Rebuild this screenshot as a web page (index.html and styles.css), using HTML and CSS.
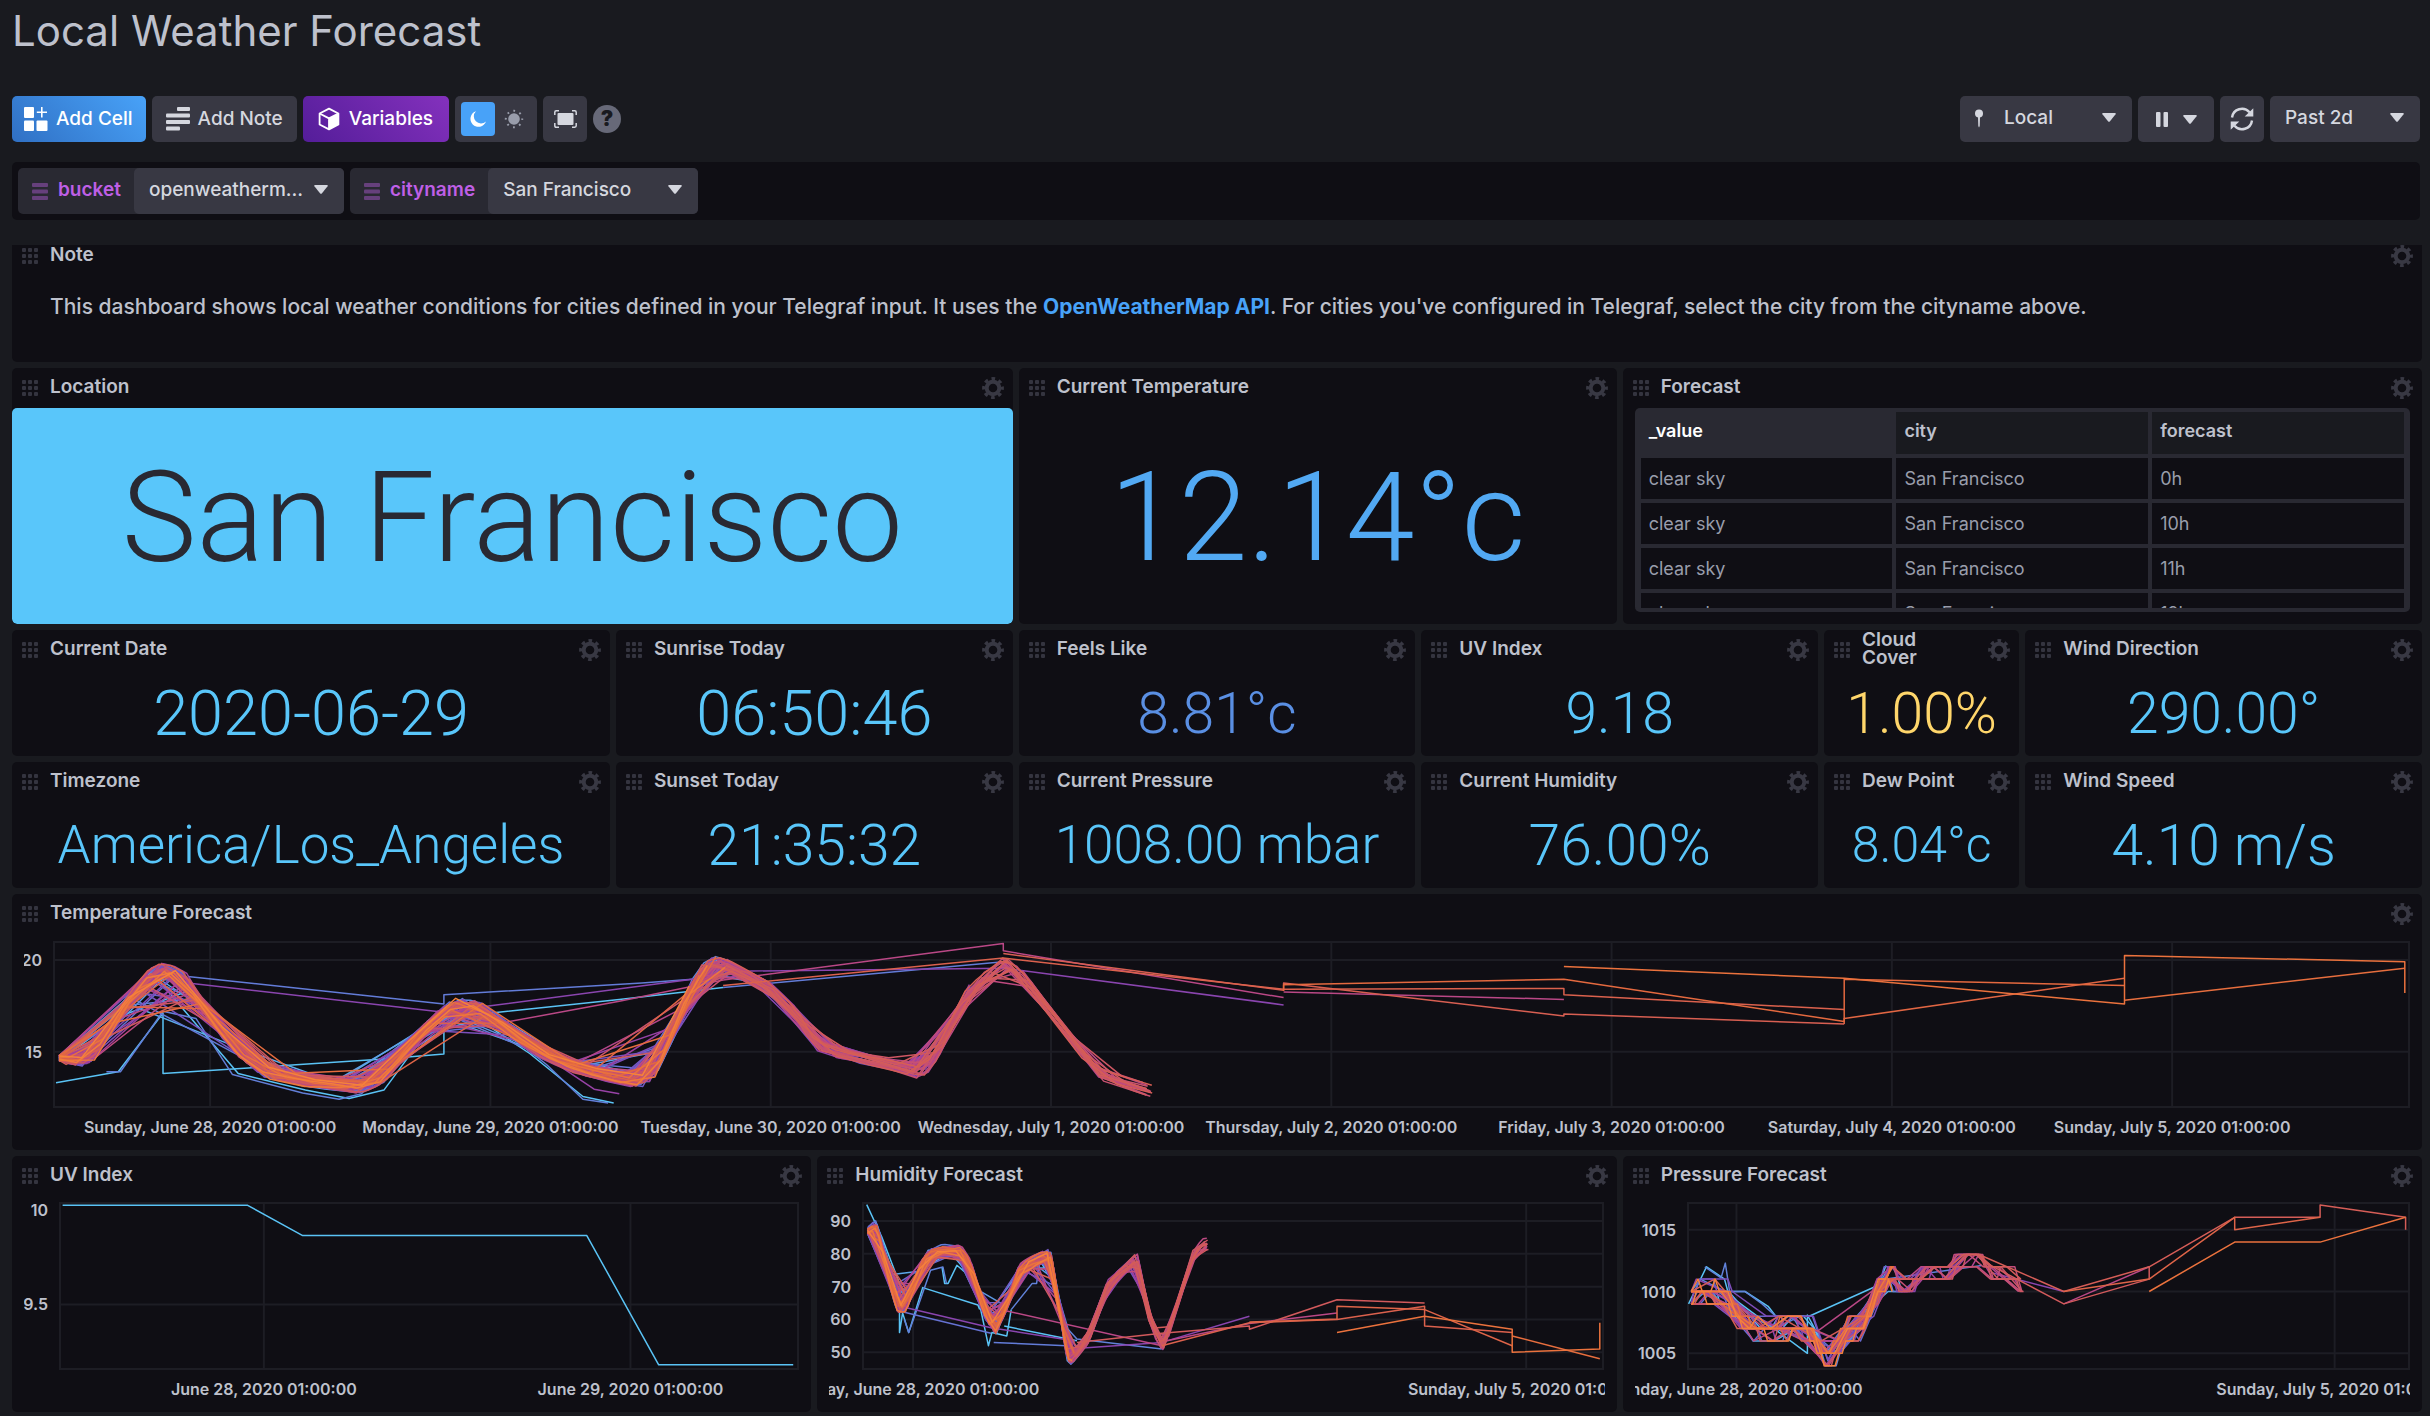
FILE: index.html
```html
<!DOCTYPE html>
<html lang="en">
<head>
<meta charset="utf-8">
<meta name="viewport" content="width=device-width, initial-scale=1">
<title>Local Weather Forecast</title>
<link rel="stylesheet" href="styles.css">
</head>
<body>
<svg class="sprite" aria-hidden="true">
  <symbol id="i-gear" viewBox="0 0 22 22">
    <circle cx="11" cy="11" r="6.3" fill="none" stroke="currentColor" stroke-width="4"/>
    <circle cx="11" cy="11" r="9.2" fill="none" stroke="currentColor" stroke-width="3.4" stroke-dasharray="3.6 3.626" stroke-dashoffset="1.8"/>
  </symbol>
  <symbol id="i-grip" viewBox="0 0 17 17">
    <g fill="currentColor">
      <rect x="0" y="0" width="4" height="4" rx="1"/><rect x="6" y="0" width="4" height="4" rx="1"/><rect x="12" y="0" width="4" height="4" rx="1"/>
      <rect x="0" y="6" width="4" height="4" rx="1"/><rect x="6" y="6" width="4" height="4" rx="1"/><rect x="12" y="6" width="4" height="4" rx="1"/>
      <rect x="0" y="12" width="4" height="4" rx="1"/><rect x="6" y="12" width="4" height="4" rx="1"/><rect x="12" y="12" width="4" height="4" rx="1"/>
    </g>
  </symbol>
  <symbol id="i-caret" viewBox="0 0 14 9"><path d="M1 0h12q1.400 0 .6 1.200L8 8.200q-1 1-2 0L.4 1.200Q-.4 0 1 0z" fill="currentColor"/></symbol>
  <symbol id="i-bars" viewBox="0 0 16 17"><g fill="currentColor"><rect width="16" height="4" rx="1"/><rect y="6.500" width="16" height="4" rx="1"/><rect y="13" width="16" height="4" rx="1"/></g></symbol>
</svg>

<header class="page-header">
  <h1 class="page-title">Local Weather Forecast</h1>
</header>

<div class="toolbar">
  <div class="toolbar-group">
    <button class="btn btn-primary" type="button">
      <svg class="icon" viewBox="0 0 24 24" aria-hidden="true"><g fill="currentColor"><rect x="0" y="0" width="10" height="11" rx="1"/><rect x="0" y="13.500" width="10" height="10.500" rx="1"/><rect x="12.500" y="13.500" width="11" height="10.500" rx="1"/><path d="M17 0h1.600v4.400H23V6h-4.400v4.500H17V6h-4.200V4.400H17z"/></g></svg>
      <span>Add Cell</span>
    </button>
    <button class="btn" type="button">
      <svg class="icon" viewBox="0 0 24 24" aria-hidden="true"><g fill="currentColor"><rect x="11" y="0" width="13" height="4" rx="1"/><rect x="0" y="6.500" width="24" height="4" rx="1"/><rect x="0" y="13" width="24" height="4" rx="1"/><rect x="0" y="19.500" width="14" height="4" rx="1"/></g></svg>
      <span>Add Note</span>
    </button>
    <button class="btn btn-accent" type="button">
      <svg class="icon" viewBox="0 0 24 24" aria-hidden="true"><path d="M12 1.600 21.400 6.500v11L12 22.400 2.600 17.500v-11z" fill="none" stroke="currentColor" stroke-width="1.800" stroke-linejoin="round"/><path d="M2.600 6.500 12 11.400l9.400-4.900M12 11.400v11" fill="none" stroke="currentColor" stroke-width="1.800"/><path d="M12 11.400 21.400 6.500v11L12 22.400z" fill="currentColor"/></svg>
      <span>Variables</span>
    </button>
    <div class="mode-switch" role="group" aria-label="Theme">
      <button class="mode mode-on" type="button" aria-label="Dark mode"><svg width="18" height="18" viewBox="0 0 18 18" aria-hidden="true"><path d="M7 1.200A8 8 0 1 0 17 11.500 6.600 6.600 0 0 1 7 1.200z" fill="currentColor"/></svg></button>
      <button class="mode" type="button" aria-label="Light mode"><svg width="20" height="20" viewBox="0 0 20 20" aria-hidden="true"><circle cx="10" cy="10" r="5.800" fill="currentColor"/><circle cx="10" cy="10" r="8.200" fill="none" stroke="currentColor" stroke-width="2" stroke-dasharray="1.800 4.640" stroke-dashoffset=".9"/></svg></button>
    </div>
    <button class="btn btn-icon" type="button" aria-label="Presentation mode">
      <svg width="23" height="18" viewBox="0 0 23 18" aria-hidden="true"><rect x="3.500" y="3" width="16" height="12" rx="1" fill="currentColor"/><path d="M.8 5V2.200Q.8.800 2.200.800H5M18 .8h2.800q1.400 0 1.400 1.400V5M22.200 13v2.800q0 1.400-1.400 1.400H18M5 17.200H2.200q-1.400 0-1.400-1.400V13" fill="none" stroke="currentColor" stroke-width="1.500"/></svg>
    </button>
    <button class="help" type="button" aria-label="Help">?</button>
  </div>
  <div class="toolbar-group">
    <div class="dropdown dropdown-zone">
      <svg class="pin" viewBox="0 0 8 18" aria-hidden="true"><circle cx="4" cy="4" r="4" fill="currentColor"/><path d="M3 7h2l-.3 9.500-.7 1.500-.7-1.500z" fill="currentColor"/></svg>
      <select aria-label="Time zone"><option>Local</option><option>UTC</option></select>
      <svg class="caret"><use href="#i-caret"/></svg>
    </div>
    <button class="btn btn-pause" type="button" aria-label="Auto refresh">
      <svg width="12" height="15" viewBox="0 0 12 15" aria-hidden="true"><rect width="4.500" height="15" rx="1" fill="currentColor"/><rect x="7.500" width="4.500" height="15" rx="1" fill="currentColor"/></svg>
      <svg width="14" height="9"><use href="#i-caret"/></svg>
    </button>
    <button class="btn btn-icon" type="button" aria-label="Refresh">
      <svg width="24" height="24" viewBox="0 0 24 24" aria-hidden="true"><path d="M2 10.500A10 10 0 0 1 19.500 5.300M22 13.500A10 10 0 0 1 4.500 18.700" fill="none" stroke="currentColor" stroke-width="2.400"/><path d="M23.300 1.200v8.300h-8.600zM.7 22.800v-8.300h8.600z" fill="currentColor"/></svg>
    </button>
    <div class="dropdown dropdown-range">
      <select aria-label="Time range"><option>Past 2d</option><option>Past 7d</option></select>
      <svg class="caret"><use href="#i-caret"/></svg>
    </div>
  </div>
</div>

<div class="variables">
  <div class="variable">
    <label class="variable-name" for="var-bucket"><svg width="16" height="17"><use href="#i-bars"/></svg><span>bucket</span></label>
    <div class="dropdown"><select id="var-bucket"><option>openweatherm…</option></select><svg class="caret"><use href="#i-caret"/></svg></div>
  </div>
  <div class="variable">
    <label class="variable-name" for="var-city"><svg width="16" height="17"><use href="#i-bars"/></svg><span>cityname</span></label>
    <div class="dropdown"><select id="var-city"><option>San Francisco</option></select><svg class="caret"><use href="#i-caret"/></svg></div>
  </div>
</div>

<main class="cells">
  <section class="cell cell-note">
    <header class="cell-header"><svg class="grip"><use href="#i-grip"/></svg><h2>Note</h2><button class="gear" type="button" aria-label="Configure"><svg><use href="#i-gear"/></svg></button></header>
    <p class="note">This dashboard shows local weather conditions for cities defined in your Telegraf input. It uses the <a href="https://openweathermap.org/api">OpenWeatherMap API</a>. For cities you've configured in Telegraf, select the city from the cityname above.</p>
  </section>

  <section class="cell w5">
    <header class="cell-header"><svg class="grip"><use href="#i-grip"/></svg><h2>Location</h2><button class="gear" type="button" aria-label="Configure"><svg><use href="#i-gear"/></svg></button></header>
    <div class="stat stat-filled">San Francisco</div>
  </section>
  <section class="cell w3">
    <header class="cell-header"><svg class="grip"><use href="#i-grip"/></svg><h2>Current Temperature</h2><button class="gear" type="button" aria-label="Configure"><svg><use href="#i-gear"/></svg></button></header>
    <div class="stat stat-xl tone-mild">12.14°c</div>
  </section>
  <section class="cell w4">
    <header class="cell-header"><svg class="grip"><use href="#i-grip"/></svg><h2>Forecast</h2><button class="gear" type="button" aria-label="Configure"><svg><use href="#i-gear"/></svg></button></header>
    <div class="table-box">
      <table>
        <thead><tr><th class="sorted" scope="col">_value</th><th scope="col">city</th><th scope="col">forecast</th></tr></thead>
        <tbody>
          <tr><td>clear sky</td><td>San Francisco</td><td>0h</td></tr>
          <tr><td>clear sky</td><td>San Francisco</td><td>10h</td></tr>
          <tr><td>clear sky</td><td>San Francisco</td><td>11h</td></tr>
          <tr><td>clear sky</td><td>San Francisco</td><td>12h</td></tr>
        </tbody>
      </table>
    </div>
  </section>

  <section class="cell w3">
    <header class="cell-header"><svg class="grip"><use href="#i-grip"/></svg><h2>Current Date</h2><button class="gear" type="button" aria-label="Configure"><svg><use href="#i-gear"/></svg></button></header>
    <div class="stat stat-l">2020-06-29</div>
  </section>
  <section class="cell w2">
    <header class="cell-header"><svg class="grip"><use href="#i-grip"/></svg><h2>Sunrise Today</h2><button class="gear" type="button" aria-label="Configure"><svg><use href="#i-gear"/></svg></button></header>
    <div class="stat stat-l">06:50:46</div>
  </section>
  <section class="cell w2">
    <header class="cell-header"><svg class="grip"><use href="#i-grip"/></svg><h2>Feels Like</h2><button class="gear" type="button" aria-label="Configure"><svg><use href="#i-gear"/></svg></button></header>
    <div class="stat tone-cool">8.81°c</div>
  </section>
  <section class="cell w2">
    <header class="cell-header"><svg class="grip"><use href="#i-grip"/></svg><h2>UV Index</h2><button class="gear" type="button" aria-label="Configure"><svg><use href="#i-gear"/></svg></button></header>
    <div class="stat">9.18</div>
  </section>
  <section class="cell w1">
    <header class="cell-header"><svg class="grip"><use href="#i-grip"/></svg><h2>Cloud Cover</h2><button class="gear" type="button" aria-label="Configure"><svg><use href="#i-gear"/></svg></button></header>
    <div class="stat tone-warm">1.00%</div>
  </section>
  <section class="cell w2">
    <header class="cell-header"><svg class="grip"><use href="#i-grip"/></svg><h2>Wind Direction</h2><button class="gear" type="button" aria-label="Configure"><svg><use href="#i-gear"/></svg></button></header>
    <div class="stat">290.00°</div>
  </section>

  <section class="cell w3">
    <header class="cell-header"><svg class="grip"><use href="#i-grip"/></svg><h2>Timezone</h2><button class="gear" type="button" aria-label="Configure"><svg><use href="#i-gear"/></svg></button></header>
    <div class="stat stat-m">America/Los_Angeles</div>
  </section>
  <section class="cell w2">
    <header class="cell-header"><svg class="grip"><use href="#i-grip"/></svg><h2>Sunset Today</h2><button class="gear" type="button" aria-label="Configure"><svg><use href="#i-gear"/></svg></button></header>
    <div class="stat">21:35:32</div>
  </section>
  <section class="cell w2">
    <header class="cell-header"><svg class="grip"><use href="#i-grip"/></svg><h2>Current Pressure</h2><button class="gear" type="button" aria-label="Configure"><svg><use href="#i-gear"/></svg></button></header>
    <div class="stat stat-m">1008.00 mbar</div>
  </section>
  <section class="cell w2">
    <header class="cell-header"><svg class="grip"><use href="#i-grip"/></svg><h2>Current Humidity</h2><button class="gear" type="button" aria-label="Configure"><svg><use href="#i-gear"/></svg></button></header>
    <div class="stat">76.00%</div>
  </section>
  <section class="cell w1">
    <header class="cell-header"><svg class="grip"><use href="#i-grip"/></svg><h2>Dew Point</h2><button class="gear" type="button" aria-label="Configure"><svg><use href="#i-gear"/></svg></button></header>
    <div class="stat stat-s">8.04°c</div>
  </section>
  <section class="cell w2">
    <header class="cell-header"><svg class="grip"><use href="#i-grip"/></svg><h2>Wind Speed</h2><button class="gear" type="button" aria-label="Configure"><svg><use href="#i-gear"/></svg></button></header>
    <div class="stat">4.10 m/s</div>
  </section>

  <section class="cell w12">
    <header class="cell-header"><svg class="grip"><use href="#i-grip"/></svg><h2>Temperature Forecast</h2><button class="gear" type="button" aria-label="Configure"><svg><use href="#i-gear"/></svg></button></header>
    <svg class="chart" data-chart="temperature" role="img" aria-label="Temperature forecast"></svg>
  </section>

  <section class="cell w4">
    <header class="cell-header"><svg class="grip"><use href="#i-grip"/></svg><h2>UV Index</h2><button class="gear" type="button" aria-label="Configure"><svg><use href="#i-gear"/></svg></button></header>
    <svg class="chart" data-chart="uv" role="img" aria-label="UV index"></svg>
  </section>
  <section class="cell w4">
    <header class="cell-header"><svg class="grip"><use href="#i-grip"/></svg><h2>Humidity Forecast</h2><button class="gear" type="button" aria-label="Configure"><svg><use href="#i-gear"/></svg></button></header>
    <svg class="chart" data-chart="humidity" role="img" aria-label="Humidity forecast"></svg>
  </section>
  <section class="cell w4">
    <header class="cell-header"><svg class="grip"><use href="#i-grip"/></svg><h2>Pressure Forecast</h2><button class="gear" type="button" aria-label="Configure"><svg><use href="#i-gear"/></svg></button></header>
    <svg class="chart" data-chart="pressure" role="img" aria-label="Pressure forecast"></svg>
  </section>
</main>
<script src="charts.js"></script>
</body>
</html>
```
FILE: styles.css
```css
:root {
  --page: #191a1f;
  --cell: #0f0e14;
  --panel: #292932;
  --control: #383843;
  --line: #1d1d24;
  --text: #bec1cc;
  --bright: #d5d7df;
  --muted: #999dab;
  --dim: #34343f;
  --sky: #59c6fa;
  --blue: #48a2f8;
}

* { box-sizing: border-box; }

body {
  margin: 0;
  padding: 0 8px 4px 12px;
  background: var(--page);
  color: var(--text);
  font-family: Inter, "Liberation Sans", sans-serif;
  font-size: 18px;
}

button, select {
  border: 0;
  margin: 0;
  font: inherit;
  color: inherit;
  cursor: pointer;
}

.sprite { display: none; }

.page-title {
  margin: 0 0 34px;
  font-size: 42px;
  font-weight: 400;
  line-height: 62px;
}

/* Toolbar */
.toolbar {
  display: flex;
  justify-content: space-between;
  margin-right: 2px;
}

.toolbar-group {
  display: flex;
  align-items: center;
  gap: 6px;
}

.btn {
  display: flex;
  align-items: center;
  gap: 8px;
  height: 46px;
  padding: 0 14px;
  border-radius: 5px;
  background: var(--control);
  color: var(--bright);
  font-size: 19px;
  font-weight: 500;
}

.btn span { padding-bottom: 2px; }

.icon { width: 24px; height: 24px; }

.btn-primary {
  padding: 0 13px 0 12px;
  background: linear-gradient(45deg, #3070c4, #48a2f8);
  color: #fff;
}

.btn-accent {
  padding: 0 16px 0 14px;
  background: linear-gradient(45deg, #541d99, #8431bd);
  color: #fff;
}

.btn-icon {
  justify-content: center;
  width: 44px;
  padding: 0;
}

.btn-pause {
  justify-content: center;
  gap: 15px;
  width: 76px;
}

.mode-switch {
  display: flex;
  gap: 2px;
  height: 46px;
  padding: 6px;
  border-radius: 5px;
  background: var(--control);
}

.mode {
  display: flex;
  align-items: center;
  justify-content: center;
  width: 34px;
  height: 34px;
  padding: 0;
  border-radius: 4px;
  background: none;
  color: var(--muted);
}

.mode-on {
  background: var(--blue);
  color: #fff;
}

.help {
  width: 28px;
  height: 28px;
  padding: 0;
  border-radius: 50%;
  background: #676978;
  color: var(--page);
  font-size: 21px;
  font-weight: 900;
  line-height: 28px;
}

.dropdown {
  position: relative;
  width: 210px;
}

.dropdown select {
  display: block;
  width: 100%;
  height: 46px;
  padding: 0 36px 3px 15px;
  border-radius: 5px;
  appearance: none;
  background: var(--control);
  color: var(--bright);
  font-size: 19px;
  font-weight: 500;
}

.dropdown-zone { width: 172px; }
.dropdown-zone select { padding-left: 44px; }
.dropdown-range { width: 150px; }

.caret {
  position: absolute;
  top: 17px;
  right: 16px;
  width: 14px;
  height: 9px;
  color: var(--bright);
  pointer-events: none;
}

.pin {
  position: absolute;
  top: 13px;
  left: 15px;
  width: 8px;
  height: 19px;
  color: var(--bright);
  pointer-events: none;
}

/* Variables */
.variables {
  display: flex;
  gap: 6px;
  margin: 20px 2px 25px 0;
  padding: 6px;
  border-radius: 5px;
  background: var(--cell);
}

.variable {
  display: flex;
  border-radius: 5px;
  background: var(--panel);
}

.variable-name {
  display: flex;
  align-items: center;
  gap: 10px;
  padding: 0 13px 0 14px;
  color: #bf5fe6;
  font-size: 19px;
  font-weight: 600;
}

.variable-name span { padding-bottom: 3px; }
.variable-name svg { color: #66407c; }

/* Cells */
.cells {
  display: grid;
  grid-template-columns: repeat(12, minmax(0, 1fr));
  grid-template-rows: 117px 256px repeat(2, 126px) repeat(2, 256px);
  gap: 6px;
}

.cell {
  display: flex;
  flex-direction: column;
  min-width: 0;
  overflow: hidden;
  border-radius: 5px;
  background: var(--cell);
}

.w1 { grid-column: span 1; }
.w2 { grid-column: span 2; }
.w3 { grid-column: span 3; }
.w4 { grid-column: span 4; }
.w5 { grid-column: span 5; }
.w12 { grid-column: span 12; }

.cell-header {
  display: flex;
  flex: none;
  align-items: center;
  height: 40px;
  padding: 0 9px 0 10px;
}

.cell-header h2 {
  flex: 1;
  margin: 0;
  padding: 0 18px 2px 11px;
  font-size: 19px;
  font-weight: 600;
  line-height: 18px;
}

.grip {
  flex: none;
  width: 17px;
  height: 17px;
  color: var(--dim);
}

.gear {
  display: flex;
  padding: 0;
  background: none;
  color: var(--control);
}

.gear svg { width: 22px; height: 22px; }

.cell-note {
  grid-column: span 12;
  border-top-left-radius: 0;
  border-top-right-radius: 0;
}

.cell-note .cell-header { margin-top: -9px; }

.note {
  margin: 0;
  padding: 16px 38px;
  font-size: 21px;
  font-weight: 500;
  line-height: 30px;
}

.note a {
  color: var(--blue);
  font-weight: 700;
  text-decoration: none;
}

/* Single values */
.stat {
  display: flex;
  flex: 1;
  align-items: center;
  justify-content: center;
  color: var(--sky);
  font-family: Roboto, "Liberation Sans", sans-serif;
  font-size: 57px;
  font-weight: 300;
  line-height: 1;
  white-space: nowrap;
}

.stat-s { font-size: 50px; }
.stat-m { font-size: 53px; }
.stat-l { font-size: 63px; }

.stat-xl {
  padding-top: 4px;
  font-size: 124px;
}

.stat-filled {
  padding-top: 4px;
  border-radius: 5px;
  background: var(--sky);
  color: var(--panel);
  font-size: 126px;
}

.tone-mild { color: #52a9f3; }
.tone-cool { color: #5a8fe3; }
.tone-warm { color: #ffd66b; }

/* Table */
.table-box {
  height: 204px;
  margin: 0 12px;
  padding: 0 2px;
  overflow: hidden;
  border-bottom: 4px solid var(--panel);
  border-radius: 5px;
  background: var(--panel);
}

.table-box table {
  width: 100%;
  table-layout: fixed;
  border-spacing: 4px;
}

.table-box th,
.table-box td {
  height: 41px;
  padding: 0 8px;
  background: var(--cell);
  color: var(--muted);
  font-weight: 400;
  line-height: 24px;
  text-align: left;
}

.table-box th {
  height: 42px;
  padding-bottom: 4px;
  background: var(--page);
  color: var(--text);
  font-weight: 600;
}

.table-box th.sorted {
  background: var(--panel);
  color: #fff;
}

/* Charts */
.chart {
  flex: 1;
  width: calc(100% - 24px);
  min-height: 0;
  margin: 0 12px;
}

.chart .frame,
.chart .grid {
  fill: none;
  stroke: var(--line);
  stroke-width: 2;
}

.chart .series {
  fill: none;
  stroke-linejoin: round;
}

.chart text {
  fill: var(--text);
  font-size: 16px;
  font-weight: 600;
}
```
FILE: charts.js
```js
// Times are in days, counted from June 28, 01:00.
const PALETTE = ['#5ac3f5', '#5f8ade', '#6a62cc', '#8347b4', '#a43f9c', '#bf4a80', '#d0595f', '#e3683f', '#f8853a'];
const DAYS = ['Sunday, June 28', 'Monday, June 29', 'Tuesday, June 30', 'Wednesday, July 1', 'Thursday, July 2', 'Friday, July 3', 'Saturday, July 4', 'Sunday, July 5'];

const CHARTS = {
  temperature: {
    x: [-0.557, 7.845], y: [11.98, 20.98], left: 30, top: 8, bottom: 173,
    xTicks: DAYS.map((d, i) => [i, d + ', 2020 01:00:00']),
    yTicks: [20, 15], grid: [20, 15],
    spread: 0.4, lines: 84,
    base: [[-.539,14.65],[-.459,14.4],[-.415,14.8],[-.35,16.5],[-.284,18],[-.211,19.3],[-.168,19.5],[-.124,19.3],[-.08,18.9],[-.051,18],[.036,16.2],[.124,14.6],[.197,13.9],[.328,13.4],[.459,13.2],[.539,13.05],[.62,13.6],[.707,15.3],[.794,16.7],[.875,17.6],[.955,17.5],[1.07,16.1],[1.16,15.1],[1.29,14.2],[1.407,13.75],[1.5,13.4],[1.535,13.3],[1.586,13.9],[1.65,16],[1.71,18.4],[1.754,19.4],[1.79,19.9],[1.834,19.8],[1.93,19],[2,18.4],[2.09,17.1],[2.16,15.4],[2.25,14.9],[2.41,14.4],[2.54,13.8],[2.585,14.6],[2.7,18.2],[2.79,19.4],[2.83,19.9],[2.89,19.4],[2.985,17.4],[3.17,13.8],[3.28,13.2],[3.37,12.8]],
    single: [
      [0, [[-.55,13.3],[-.328,13.9],[-.168,17.1],[-.168,13.8],[.62,14.6],[.834,14.87],[.834,17.1],[1.02,17.13],[1.46,17.85],[1.83,18.5]]],
      [0, [[-.19,19],[.1,13.8],[.34,12.9],[.496,12.45],[.62,12.9],[.794,16.5],[.875,17.6],[1.14,14.9],[1.33,12.55],[1.44,12.2]]],
      [.16, [[-.37,13.9],[-.32,13.9],[-.168,17.2],[-.05,16.8],[.08,13.75],[.33,12.75],[.46,12.4],[.54,12.7],[.8,16.7],[.9,17.9],[1.2,14.3],[1.33,12.4],[1.42,12.2]]],
      [.17, [[-.08,19.1],[.834,17.6],[.834,18.1],[1.54,18.75],[1.72,18.95]]],
      [.17, [[1.83,18.5],[2.83,19.9]]],
      [.4, [[-.08,18.75],[.834,17.15],[1,17.5],[1.7,18.9],[1.93,19.4],[2.83,19.55],[3.83,17.55]]],
      [.45, [[1.2,14.7],[1.37,12.95],[1.46,12.7]]],
      [.6, [[1,16.45],[1.46,17.75],[1.83,18.9],[2.83,20.9],[2.83,20.5],[3.83,17.95]]],
      [.6, [[3.83,18.25],[4.83,17.85]]],
      [.82, [[1.83,18.6],[2.83,20.1],[3.83,18.4],[4.83,18.45],[4.83,18.1],[5.83,17.3]]],
      [.8, [[2.83,20.35],[3.83,18.35],[3.83,18.75],[4.83,16.95],[4.83,17.05],[5.83,16.5]]],
      [.88, [[3.83,18.3],[3.83,18.65],[4.83,18.95],[5.83,16.65],[5.83,18.95],[6.83,18.6]]],
      [.86, [[5.83,16.5],[5.83,16.8],[6.83,19]]],
      [.92, [[4.83,19.65],[5.83,19],[6.83,17.6],[6.83,20.25],[7.83,19.9],[7.83,18.2]]],
      [.9, [[6.83,17.8],[7.83,19.55]]]
    ]
  },
  uv: {
    x: [-.556, 1.457], y: [9.158, 10.038], left: 36, top: 7, bottom: 173,
    xTicks: [[0, 'June 28, 2020 01:00:00'], [1, 'June 29, 2020 01:00:00']],
    yTicks: [10, 9.5], grid: [9.5],
    single: [[0, [[-.549,10.026],[-.044,10.026],[.106,9.865],[.881,9.865],[1.077,9.18],[1.444,9.18]]]]
  },
  humidity: {
    x: [-.572, 7.877], y: [44.9, 95.5], left: 34, top: 7, bottom: 173,
    xTicks: [[0, 'Sunday, June 28, 2020 01:00:00'], [7, 'Sunday, July 5, 2020 01:00:00']],
    yTicks: [90, 80, 70, 60, 50], grid: [90, 80, 70, 60, 50],
    spread: 2.2, lines: 66,
    base: [[-.52,86.9],[-.426,88.4],[-.37,83.8],[-.29,73.7],[-.18,64],[-.085,64],[.01,70.6],[.145,79],[.316,81],[.544,81],[.658,76.2],[.81,62.5],[.943,57],[1.04,62.5],[1.21,75.2],[1.42,78.4],[1.57,79.7],[1.646,67.5],[1.76,49],[1.806,48],[2,54.4],[2.22,70.1],[2.43,75.7],[2.56,78.7],[2.69,61.5],[2.825,52],[2.88,53.3],[3.09,70.6],[3.2,79.7],[3.3,83],[3.38,83]],
    single: [
      [0, [[-.53,95],[-.36,85.3],[-.155,71],[-.155,56],[-.12,62],[-.05,56],[.11,69.7],[.74,64.4],[.76,63]]],
      [0, [[.33,76],[.36,71],[.4,71],[.5,76.5],[.7,72],[.86,52],[.9,56],[1.07,55],[1.12,63]]],
      [0, [[1.04,58],[1.87,53.5]]],
      [.15, [[-.1,60],[-.05,56],[.03,62],[.2,75],[.34,76],[.38,71]]],
      [.15, [[1.12,63],[1.36,71],[1.41,71],[1.45,78]]],
      [.2, [[-.1,62.2],[.89,55.8]]],
      [.17, [[.92,53],[1.75,52]]],
      [.15, [[1.65,68],[1.77,57],[1.87,54],[2.84,51]]],
      [.4, [[-.1,63.7],[.89,57.5],[1.85,53.4]]],
      [.4, [[1.9,51.2],[2.84,53],[3.84,61]]],
      [.6, [[1.07,62.6],[2.84,52]]],
      [.6, [[2.9,53.5],[3.84,58.8],[4.84,62]]],
      [.76, [[1.87,53],[2.84,55.8],[3.84,58],[3.84,57],[4.84,66],[5.84,65]]],
      [.82, [[2.84,52],[3.84,59],[4.84,60],[5.84,64],[5.84,58],[6.84,56]]],
      [.84, [[3.84,59.2],[4.84,60.1],[4.84,64],[5.84,63],[6.84,52]]],
      [.92, [[4.84,56],[5.84,61],[6.84,57],[6.84,50],[7.84,51],[7.84,59]]],
      [.9, [[6.84,55],[7.84,48]]]
    ]
  },
  pressure: {
    x: [-.567, 7.87], y: [1003.73, 1017.16], left: 53, top: 7, bottom: 173,
    xTicks: [[0, 'Sunday, June 28, 2020 01:00:00'], [7, 'Sunday, July 5, 2020 01:00:00']],
    yTicks: [1015, 1010, 1005], grid: [1015, 1010, 1005],
    spread: .95, lines: 46, rounded: true,
    base: [[-.53,1009.6],[-.38,1010],[-.14,1009.7],[.1,1007.3],[.4,1006.8],[.68,1007.3],[.86,1006.6],[1.04,1004.8],[1.16,1005.1],[1.31,1007],[1.48,1007.2],[1.67,1010.3],[1.79,1011.3],[2.03,1010.3],[2.21,1011.7],[2.47,1011.6],[2.64,1012.7],[2.87,1012.7],[3,1011.3],[3.29,1011.1],[3.33,1010.1],[3.37,1010]],
    single: [
      [0, [[-.56,1009],[-.35,1012],[-.14,1011],[-.1,1010],[.1,1010],[.37,1008.8],[.46,1008],[.85,1008],[1.66,1010.5],[1.75,1012.1]]],
      [0, [[-.05,1009.5],[.83,1005],[.83,1008.1],[1.07,1005]]],
      [.15, [[-.37,1012],[-.18,1011.1],[-.13,1012.3],[-.08,1010],[.1,1010],[.3,1009],[.46,1008],[.89,1008],[1.07,1004.4],[1.34,1008],[1.43,1008],[1.75,1011],[2.87,1012.1]]],
      [.35, [[-.4,1011],[-.1,1011],[-.05,1010],[.35,1008],[.9,1008],[1.07,1004.5],[1.4,1008]]],
      [.6, [[.95,1006.8],[1.74,1010.8]]],
      [.4, [[3,1011.5],[3.83,1010]]],
      [.6, [[3.83,1009],[4.83,1012]]],
      [.78, [[2.87,1012.9],[3.83,1010],[4.83,1012],[5.83,1016],[6.83,1016],[6.83,1017],[7.83,1016],[7.83,1015]]],
      [.76, [[2.87,1012.5],[3.83,1009],[4.83,1011],[4.83,1012]]],
      [.84, [[3.83,1010],[4.83,1011],[5.83,1016],[5.83,1015],[6.83,1016]]],
      [.92, [[4.83,1010],[5.83,1014],[6.83,1014],[7.83,1016]]],
      [.98, [[-.53,1010],[-.45,1011],[-.4,1010],[-.3,1010],[-.25,1011],[-.2,1010],[-.1,1010],[0,1008],[.15,1007],[.25,1008],[.4,1007],[.6,1008],[.75,1008],[.82,1007],[.9,1007],[.98,1005],[1.15,1005],[1.3,1007],[1.48,1007],[1.66,1011],[1.75,1011]]]
    ]
  }
};

function color(f) {
  const p = Math.min(Math.max(f, 0), .999) * (PALETTE.length - 1);
  const i = Math.floor(p), k = p - i;
  const rgb = n => [1, 3, 5].map(o => parseInt(PALETTE[n].slice(o, o + 2), 16));
  const a = rgb(i), b = rgb(i + 1);
  return 'rgb(' + a.map((v, j) => Math.round(v + (b[j] - v) * k)).join(',') + ')';
}

function valueAt(base, t) {
  for (let i = 1; i < base.length; i++) {
    if (t <= base[i][0]) {
      const [t0, v0] = base[i - 1], [t1, v1] = base[i];
      return v0 + (v1 - v0) * (t - t0) / (t1 - t0);
    }
  }
  return base[base.length - 1][1];
}

// One forecast horizon per line: each follows the shared curve at its own sampling interval.
function forecastLines(c) {
  const out = [];
  const start = c.base[0][0], last = c.base[c.base.length - 1][0];
  const steps = [1, 3, 6, 2, 9, 4, 7, 1, 8, 5, 3];
  const snap = v => c.rounded ? Math.round(v) : v;
  for (let i = 0; i < c.lines; i++) {
    const f = i / (c.lines - 1);
    if (f > .8 && i % 2) continue;
    const end = f < .3 ? 1.95 : f < .55 ? 2.75 : f < .8 ? last : 1.85;
    const wide = steps[i % steps.length] / 24, fine = Math.min(wide, 4 / 24);
    const shift = c.spread * Math.sin(i * 2.4) * .55;
    const pts = [[start, snap(valueAt(c.base, start) + shift * .6)]];
    let t = start + wide * (((i * .37) % 1) + .15);
    while (t < end) {
      pts.push([t, snap(valueAt(c.base, t) + shift + c.spread * .3 * Math.sin(t * 9 + i))]);
      t += t > 1.4 ? fine : wide;
    }
    out.push([f, pts]);
  }
  return out;
}

function draw(svg) {
  const c = CHARTS[svg.dataset.chart];
  const width = svg.clientWidth, right = width - 1;
  const X = t => c.left + (t - c.x[0]) / (c.x[1] - c.x[0]) * (right - c.left);
  const Y = v => c.bottom - (v - c.y[0]) / (c.y[1] - c.y[0]) * (c.bottom - c.top);
  let html = '';
  c.xTicks.forEach(([t]) => html += `<line class="grid" x1="${X(t)}" x2="${X(t)}" y1="${c.top}" y2="${c.bottom}"/>`);
  c.grid.forEach(v => html += `<line class="grid" x1="${c.left}" x2="${right}" y1="${Y(v)}" y2="${Y(v)}"/>`);
  html += `<rect class="frame" x="${c.left}" y="${c.top}" width="${right - c.left}" height="${c.bottom - c.top}"/>`;
  const all = (c.base ? forecastLines(c) : []).concat(c.single).sort((a, b) => a[0] - b[0]);
  all.forEach(([f, pts]) => html += `<polyline class="series" stroke="${color(f)}" stroke-width="1.5" points="${pts.map(p => X(p[0]).toFixed(1) + ',' + Y(p[1]).toFixed(1)).join(' ')}"/>`);
  c.yTicks.forEach(v => html += `<text x="${c.left - 12}" y="${Y(v) + 6}" text-anchor="end">${v}</text>`);
  c.xTicks.forEach(([t, s]) => html += `<text x="${X(t)}" y="${c.bottom + 26}" text-anchor="middle">${s}</text>`);
  svg.innerHTML = html;
}

const charts = document.querySelectorAll('.chart');
const drawAll = () => charts.forEach(draw);
drawAll();
window.addEventListener('resize', drawAll);
```
